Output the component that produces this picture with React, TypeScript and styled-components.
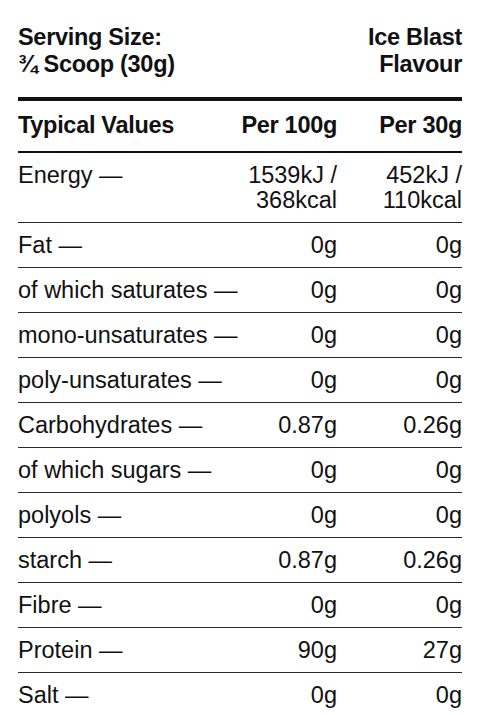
import styled, { createGlobalStyle } from "styled-components";

const GlobalStyle = createGlobalStyle`
  html, body {
    margin: 0;
    padding: 0;
    background: #ffffff;
  }

  body {
    font-family: "Liberation Sans", Arial, Helvetica, sans-serif;
    color: #111111;
    -webkit-font-smoothing: antialiased;
  }
`;

const Panel = styled.div`
  width: 480px;
  box-sizing: border-box;
  padding: 24px 18px 0;
`;

const Heading = styled.header`
  display: flex;
  justify-content: space-between;
  font-size: 23.5px;
  font-weight: 700;
  line-height: 27px;
  letter-spacing: -0.3px;
  padding-bottom: 19px;
  border-bottom: 4px solid #111111;
`;

const HeadingBlock = styled.div<{ $right?: boolean }>`
  text-align: ${(p) => (p.$right ? "right" : "left")};
`;

const Row = styled.div<{ $head?: boolean }>`
  display: grid;
  grid-template-columns: minmax(0, 1fr) 110px 125px;
  font-size: 23.5px;
  line-height: 25px;
  font-weight: ${(p) => (p.$head ? 700 : 400)};
  letter-spacing: ${(p) => (p.$head ? "-0.3px" : "0")};
  padding: ${(p) => (p.$head ? "12px 0 13px" : "10px 0 9px")};
  border-bottom: ${(p) => (p.$head ? "2px solid #111111" : "1px solid #2b2b2b")};

  &:last-child {
    border-bottom: none;
  }
`;

const Cell = styled.div<{ $num?: boolean }>`
  text-align: ${(p) => (p.$num ? "right" : "left")};
  white-space: nowrap;
`;

type Nutrient = {
  label: string;
  per100: string[];
  perServing: string[];
};

const nutrients: Nutrient[] = [
  { label: "Energy —", per100: ["1539kJ /", "368kcal"], perServing: ["452kJ /", "110kcal"] },
  { label: "Fat —", per100: ["0g"], perServing: ["0g"] },
  { label: "of which saturates —", per100: ["0g"], perServing: ["0g"] },
  { label: "mono-unsaturates —", per100: ["0g"], perServing: ["0g"] },
  { label: "poly-unsaturates —", per100: ["0g"], perServing: ["0g"] },
  { label: "Carbohydrates —", per100: ["0.87g"], perServing: ["0.26g"] },
  { label: "of which sugars —", per100: ["0g"], perServing: ["0g"] },
  { label: "polyols —", per100: ["0g"], perServing: ["0g"] },
  { label: "starch —", per100: ["0.87g"], perServing: ["0.26g"] },
  { label: "Fibre —", per100: ["0g"], perServing: ["0g"] },
  { label: "Protein —", per100: ["90g"], perServing: ["27g"] },
  { label: "Salt —", per100: ["0g"], perServing: ["0g"] },
];

function Lines({ items }: { items: string[] }) {
  return (
    <>
      {items.map((line, i) => (
        <div key={i}>{line}</div>
      ))}
    </>
  );
}

export default function App() {
  return (
    <>
      <GlobalStyle />
      <Panel>
        <Heading>
          <HeadingBlock>
            <div>Serving Size:</div>
            <div>¾ Scoop (30g)</div>
          </HeadingBlock>
          <HeadingBlock $right>
            <div>Ice Blast</div>
            <div>Flavour</div>
          </HeadingBlock>
        </Heading>
        <Row $head>
          <Cell>Typical Values</Cell>
          <Cell $num>Per 100g</Cell>
          <Cell $num>Per 30g</Cell>
        </Row>
        {nutrients.map((n) => (
          <Row key={n.label}>
            <Cell>{n.label}</Cell>
            <Cell $num>
              <Lines items={n.per100} />
            </Cell>
            <Cell $num>
              <Lines items={n.perServing} />
            </Cell>
          </Row>
        ))}
      </Panel>
    </>
  );
}
